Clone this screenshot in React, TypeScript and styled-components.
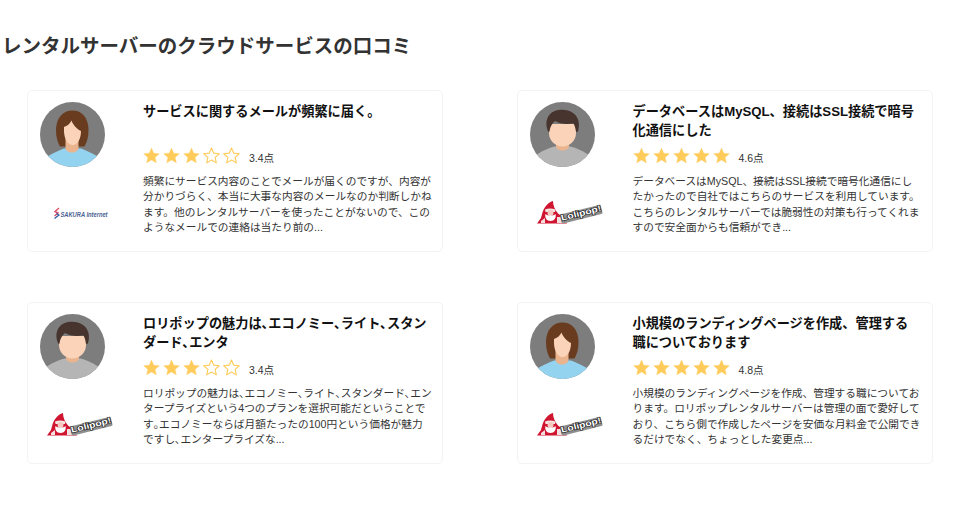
import React from "react";
import styled, { createGlobalStyle } from "styled-components";

const GlobalStyle = createGlobalStyle`
  html, body {
    margin: 0;
    padding: 0;
    background: #fff;
    font-family: "Liberation Sans", "Noto Sans CJK JP", sans-serif;
  }
`;

const Page = styled.main`
  width: 960px;
  height: 505px;
  overflow: hidden;
  box-sizing: border-box;
  padding: 33px 0 0 2px;
`;

const Heading = styled.h2`
  margin: 0 0 30px;
  font-size: 19.5px;
  line-height: 27px;
  font-weight: 700;
  color: #333;
`;

const Grid = styled.div`
  display: grid;
  grid-template-columns: 416px 416px;
  column-gap: 73.5px;
  row-gap: 50px;
  margin-left: 25px;
`;

const Card = styled.article`
  box-sizing: border-box;
  height: 162px;
  display: flex;
  gap: 30px;
  padding: 11px 0 0 12px;
  border: 1px solid #f3f3f3;
  border-radius: 5px;
  background: #fff;
`;

const Side = styled.div`
  flex: 0 0 73px;
`;

const LogoSlot = styled.div`
  width: 66px;
  height: 24px;
  margin: 34px 0 0 7px;
  display: flex;
  align-items: center;
`;

const Body = styled.div`
  flex: 1;
  min-width: 0;
`;

const Title = styled.h3`
  margin: 0;
  width: 284px;
  height: 38px;
  font-size: 13.2px;
  line-height: 19px;
  font-weight: 700;
  color: #111;
`;

const RatingRow = styled.div`
  display: flex;
  align-items: center;
  height: 20px;
  margin-top: 5px;
`;

const Stars = styled.div`
  display: flex;
  gap: 3px;
`;

const Score = styled.span`
  margin-left: 9px;
  padding-top: 4px;
  font-size: 10.5px;
  color: #333;
`;

const Text = styled.p`
  margin: 9px 0 0;
  font-size: 10.7px;
  line-height: 15.3px;
  color: #333;
  white-space: nowrap;
`;

function Star({ filled }: { filled: boolean }) {
  return (
    <svg width="17" height="17" viewBox="0 0 24 24">
      <path
        d="M12 1.5l3.2 7.2 7.8.8-5.9 5.2 1.7 7.7L12 18.4l-6.8 4 1.7-7.7L1 9.5l7.8-.8z"
        fill={filled ? "#ffcc5c" : "#fff"}
        stroke="#ffcc5c"
        strokeWidth={filled ? 0.5 : 1.6}
        strokeLinejoin="round"
      />
    </svg>
  );
}

function Avatar({ woman }: { woman: boolean }) {
  const clip = woman ? "clipw" : "clipm";
  return (
    <svg width="65" height="65" viewBox="0 0 65 65" style={{ display: "block" }}>
      <defs>
        <clipPath id={clip}>
          <circle cx="32.5" cy="32.5" r="32.5" />
        </clipPath>
      </defs>
      <g clipPath={`url(#${clip})`}>
        <rect width="65" height="65" fill="#7d7d7d" />
        {woman ? (
          <>
            <path
              d="M16 28C16 16 23 8.500 32.500 8.500S48.500 16 48.500 28c0 7-1.500 12-4 16.500H20C17.500 40 16 35 16 28z"
              fill="#693c1f"
            />
            <path d="M0 65V60c3-3 6-5 9-6.500 5-3 10-5 15-7h17c5 2 10 4 15 7 3 1.500 6 3.500 9 6.500v5z" fill="#94d3f0" />
            <path d="M25.500 36h13v10c0 2.500-3 4.500-6.500 4.500s-6.500-2-6.500-4.500z" fill="#eab48f" />
            <path
              d="M24 25c3-1 6-3 7.500-6.500C33 23 37 27 41 29c0 8-3.500 14-8.500 14S24 36 24 29z"
              fill="#fbd3b8"
            />
          </>
        ) : (
          <>
            <path d="M0 65V58c3-3 6-5 8.500-6.500 5-3 10-5.500 16-7h16c6 1.500 11 4 16 7 2.500 1.500 5.500 3.500 8.500 6.500v7z" fill="#b5b5b5" />
            <path d="M26 36h13v8.500c0 2-3 4-6.500 4s-6.500-2-6.500-4z" fill="#eab48f" />
            <path
              d="M19 22h27v9c0 8-6.500 13.500-13.500 13.500S19 39 19 31z"
              fill="#fbd3b8"
            />
            <path
              d="M18.500 30C14 21 17 10 28 8c3.500-.5 7-.5 10 .5 9 2.500 13 11 10 21l-2 .5c-.5-3-1-6-2.500-8.500-7 1-14 .5-18.500-2.500-3 2.500-5 6-5.500 10.500z"
              fill="#47342f"
            />
          </>
        )}
      </g>
    </svg>
  );
}

const LogoWord = styled.text`
  font-family: "Liberation Sans", sans-serif;
  font-weight: 700;
`;

function SakuraLogo() {
  return (
    <svg width="66" height="13" viewBox="-6 0 66 13">
      <path d="M6 1L2 4.500l3 1.500-3.500 3" stroke="#d9556f" strokeWidth="1.500" fill="none" />
      <path d="M1.500 11.500L6 8 3.500 6.500" stroke="#2b5aa6" strokeWidth="1.200" fill="none" />
      <LogoWord
        x="7.500"
        y="10"
        fontSize="6.500"
        fontStyle="italic"
        fill="#4a5f92"
        textLength="47"
        lengthAdjust="spacingAndGlyphs"
      >
        SAKURA Internet
      </LogoWord>
    </svg>
  );
}

function LolipopLogo() {
  return (
    <svg width="66" height="24" viewBox="0 0 66 24">
      <path d="M16 0c-4 1-8 5-10 10-1 3-1.500 5-2 7L0 22.500h30l-5-7-4-3C18 9 16 5 16 0z" fill="#cf1530" />
      <path d="M8 8.500c3-1.500 7-1.500 10.500 0l-.5 2.500H8.500z" fill="#f3e6e2" />
      <circle cx="13.500" cy="12" r="3" fill="#f6c9c0" />
      <path d="M8.500 13c2 2 8 2 10 0 1 3.500-1 7-5 7s-6-3.500-5-7z" fill="#fff" />
      <path d="M4 20l4-3v5H4zM20 16h6v6h-6z" fill="#f4dfe0" />
      <g transform="rotate(-14 44 12)">
        <rect x="23" y="8.500" width="42" height="9.500" rx="1.500" fill="#8f8f8f" />
        <LogoWord
          x="23.500"
          y="15"
          fontSize="8.500"
          fill="#fff"
          stroke="#1c1c1c"
          strokeWidth="1.300"
          paintOrder="stroke"
          textLength="41"
          lengthAdjust="spacingAndGlyphs"
        >
          Lolipop!
        </LogoWord>
      </g>
    </svg>
  );
}

type Review = {
  title: string;
  stars: number;
  score: string;
  woman: boolean;
  logo: "sakura" | "lolipop";
  lines: string[];
};

const reviews: Review[] = [
  {
    title: "サービスに関するメールが頻繁に届く。",
    stars: 3,
    score: "3.4点",
    woman: true,
    logo: "sakura",
    lines: [
      "頻繁にサービス内容のことでメールが届くのですが、内容が",
      "分かりづらく、本当に大事な内容のメールなのか判断しかね",
      "ます。他のレンタルサーバーを使ったことがないので、この",
      "ようなメールでの連絡は当たり前の...",
    ],
  },
  {
    title: "データベースはMySQL、接続はSSL接続で暗号化通信にした",
    stars: 5,
    score: "4.6点",
    woman: false,
    logo: "lolipop",
    lines: [
      "データベースはMySQL、接続はSSL接続で暗号化通信にし",
      "たかったので自社ではこちらのサービスを利用しています。",
      "こちらのレンタルサーバーでは脆弱性の対策も行ってくれま",
      "すので安全面からも信頼ができ...",
    ],
  },
  {
    title: "ロリポップの魅力は､エコノミー､ライト､スタンダード､エンタ",
    stars: 3,
    score: "3.4点",
    woman: false,
    logo: "lolipop",
    lines: [
      "ロリポップの魅力は､エコノミー､ライト､スタンダード､エン",
      "タープライズという4つのプランを選択可能だということで",
      "す｡エコノミーならば月額たったの100円という価格が魅力",
      "ですし､エンタープライズな...",
    ],
  },
  {
    title: "小規模のランディングページを作成、管理する職についております",
    stars: 5,
    score: "4.8点",
    woman: true,
    logo: "lolipop",
    lines: [
      "小規模のランディングページを作成、管理する職についてお",
      "ります。ロリポップレンタルサーバーは管理の面で愛好して",
      "おり、こちら側で作成したページを安価な月料金で公開でき",
      "るだけでなく、ちょっとした変更点...",
    ],
  },
];

export default function App() {
  return (
    <Page>
      <GlobalStyle />
      <Heading>レンタルサーバーのクラウドサービスの口コミ</Heading>
      <Grid>
        {reviews.map((r) => (
          <Card key={r.title}>
            <Side>
              <Avatar woman={r.woman} />
              <LogoSlot>{r.logo === "sakura" ? <SakuraLogo /> : <LolipopLogo />}</LogoSlot>
            </Side>
            <Body>
              <Title>{r.title}</Title>
              <RatingRow>
                <Stars>
                  {[0, 1, 2, 3, 4].map((i) => (
                    <Star key={i} filled={i < r.stars} />
                  ))}
                </Stars>
                <Score>{r.score}</Score>
              </RatingRow>
              <Text>
                {r.lines.map((l) => (
                  <React.Fragment key={l}>
                    {l}
                    <br />
                  </React.Fragment>
                ))}
              </Text>
            </Body>
          </Card>
        ))}
      </Grid>
    </Page>
  );
}
